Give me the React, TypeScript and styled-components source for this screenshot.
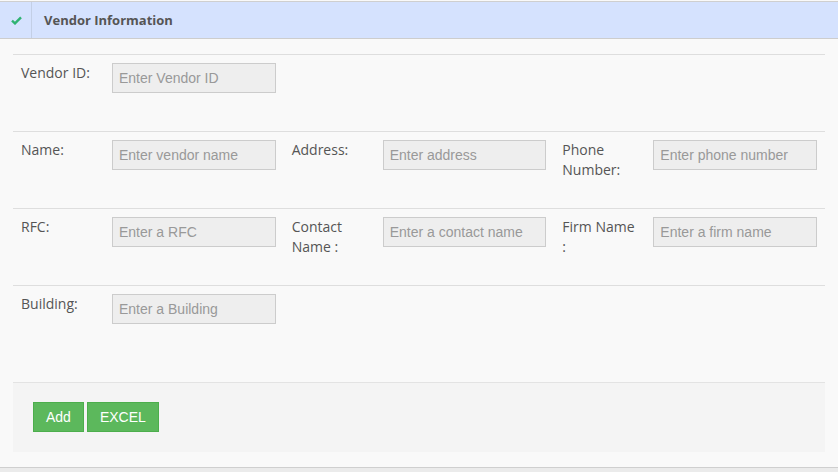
import React from "react";
import styled, { createGlobalStyle } from "styled-components";

const Global = createGlobalStyle`
  html, body { margin: 0; padding: 0; background: #ebebeb; }
  body { font-family: "Open Sans", "Liberation Sans", sans-serif; }
  * { box-sizing: border-box; }
`;

const Page = styled.div`
  background: #f9f9f9;
  padding-top: 1px;
`;

const Panel = styled.section`
  border-top: 1px solid #cfcfcf;
  border-bottom: 1px solid #cfcfcf;
  background: #f9f9f9;
`;

const Header = styled.header`
  display: flex;
  align-items: stretch;
  height: 37px;
  background: #d5e2fe;
  border-bottom: 1px solid #cdcdcd;
`;

const IconCell = styled.div`
  width: 32px;
  display: flex;
  align-items: center;
  justify-content: center;
  border-right: 1px solid #c3cfe6;
  padding-left: 1px;
`;

const Title = styled.h2`
  margin: 0;
  padding-left: 12px;
  display: flex;
  align-items: center;
  font-family: "Open Sans", sans-serif;
  font-size: 13px;
  font-weight: 700;
  color: #555;
`;

const Body = styled.div`
  padding: 15px 13px 15px 13px;
`;

const Row = styled.div`
  display: grid;
  grid-template-columns: repeat(3, 1fr);
  border-top: 1px solid #dedede;
  padding-top: 8px;
  height: 77px;
`;

const Field = styled.div`
  display: flex;
  align-items: flex-start;
  padding-left: 8px;
  min-width: 0;
`;

const Label = styled.label`
  width: 91px;
  flex-shrink: 0;
  padding-right: 14px;
  font-family: "Open Sans", sans-serif;
  font-size: 14px;
  line-height: 20px;
  color: #555;
`;

const Input = styled.input`
  width: 163.5px;
  flex-shrink: 0;
  height: 30px;
  border: 1px solid #ccc;
  background: #eee;
  padding: 0 6px;
  font-family: "Liberation Sans", Arial, sans-serif;
  font-size: 14px;
  color: #555;
  outline: none;
  border-radius: 0;
  &::placeholder { color: #999; }
`;

const Footer = styled.div`
  margin-top: 20px;
  background: #f4f4f4;
  border-top: 1px solid #e3e3e3;
  padding: 19px 20px 20px 20px;
  display: flex;
  gap: 3px;
`;

const Button = styled.button`
  height: 30px;
  padding: 0 12px;
  background: #5cb85c;
  border: 1px solid #4cae4c;
  border-radius: 0;
  color: #fff;
  font-family: "Liberation Sans", Arial, sans-serif;
  font-size: 14px;
  cursor: pointer;
`;

type F = { label: string; placeholder: string };

const rows: F[][] = [
  [{ label: "Vendor ID:", placeholder: "Enter Vendor ID" }],
  [
    { label: "Name:", placeholder: "Enter vendor name" },
    { label: "Address:", placeholder: "Enter address" },
    { label: "Phone Number:", placeholder: "Enter phone number" },
  ],
  [
    { label: "RFC:", placeholder: "Enter a RFC" },
    { label: "Contact Name :", placeholder: "Enter a contact name" },
    { label: "Firm Name :", placeholder: "Enter a firm name" },
  ],
  [{ label: "Building:", placeholder: "Enter a Building" }],
];

export default function App() {
  return (
    <>
      <Global />
      <Page>
        <Panel>
          <Header>
            <IconCell>
              <svg width="11" height="9" viewBox="0 0 11 9">
                <path d="M1 4.6 L4 7.4 L10 1.4" fill="none" stroke="#2fb372" strokeWidth="2.4" />
              </svg>
            </IconCell>
            <Title>Vendor Information</Title>
          </Header>
          <Body>
            {rows.map((r, i) => (
              <Row key={i}>
                {r.map((f) => (
                  <Field key={f.label}>
                    <Label>{f.label}</Label>
                    <Input placeholder={f.placeholder} />
                  </Field>
                ))}
              </Row>
            ))}
            <Footer>
              <Button>Add</Button>
              <Button>EXCEL</Button>
            </Footer>
          </Body>
        </Panel>
      </Page>
    </>
  );
}
